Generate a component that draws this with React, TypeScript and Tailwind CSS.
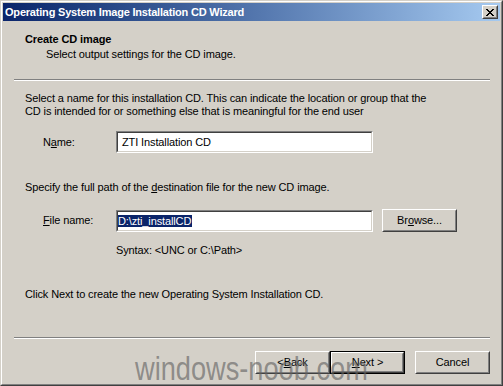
import React from "react";

const font = { fontFamily: '"Liberation Sans", Arial, sans-serif' };

function Btn({ children, w = 75 }: { children: React.ReactNode; w?: number }) {
  return (
    <div
      className="h-[23px] border border-t-white border-l-white border-r-[#404040] border-b-[#404040] bg-[#d4d0c8]"
      style={{ width: w }}
    >
      <div className="h-full w-full border border-t-[#d4d0c8] border-l-[#d4d0c8] border-r-[#808080] border-b-[#808080] flex items-center justify-center text-[11px] leading-[13px] text-black">
        {children}
      </div>
    </div>
  );
}

function DefaultBtn({ children }: { children: React.ReactNode }) {
  return (
    <div className="w-[75px] h-[23px] border border-black bg-[#d4d0c8]">
      <div className="h-full w-full border border-t-white border-l-white border-r-[#404040] border-b-[#404040]">
        <div className="h-full w-full border border-t-[#d4d0c8] border-l-[#d4d0c8] border-r-[#808080] border-b-[#808080] flex items-center justify-center text-[11px] leading-[13px] text-black">
          {children}
        </div>
      </div>
    </div>
  );
}

function TextBox({ children, pl = 4 }: { children: React.ReactNode; pl?: number }) {
  return (
    <div className="w-[257px] h-[22px] border border-t-[#808080] border-l-[#808080] border-r-white border-b-white">
      <div
        className="h-full w-full border border-t-[#404040] border-l-[#404040] border-r-[#d4d0c8] border-b-[#d4d0c8] bg-white flex items-center text-[11px] leading-[13px] text-black"
        style={{ paddingLeft: pl }}
      >
        {children}
      </div>
    </div>
  );
}

function Separator() {
  return <div className="ml-[11px] w-[476px] h-[2px] border-t border-t-[#808080] border-b border-b-white" />;
}

export default function App() {
  return (
    <div className="w-[503px] h-[386px] relative overflow-hidden tracking-[-0.12px]" style={font}>
      <div className="w-full h-full border border-t-[#d4d0c8] border-l-[#d4d0c8] border-r-[#404040] border-b-[#404040] bg-[#d4d0c8]">
        <div className="w-full h-full border border-t-white border-l-white border-r-[#808080] border-b-[#808080] p-px flex flex-col">
          {/* Title bar */}
          <div className="h-[18px] flex items-center justify-between bg-gradient-to-r from-[#0a246a] to-[#a6caf0] pl-[2px] pr-[2px]">
            <span className="text-white font-bold text-[11px] leading-[13px] whitespace-nowrap tracking-[-0.2px]">
              Operating System Image Installation CD Wizard
            </span>
            <div className="w-[16px] h-[14px] border border-t-white border-l-white border-r-[#404040] border-b-[#404040] bg-[#d4d0c8]">
              <div className="w-full h-full border border-t-[#d4d0c8] border-l-[#d4d0c8] border-r-[#808080] border-b-[#808080] flex items-center justify-center">
                <svg width="8" height="7" viewBox="0 0 8 7" shapeRendering="crispEdges">
                  <path d="M0 0h2v1H0zM6 0h2v1H6zM1 1h2v1H1zM5 1h2v1H5zM2 2h4v1H2zM3 3h2v1H3zM2 4h4v1H2zM1 5h2v1H1zM5 5h2v1H5zM0 6h2v1H0zM6 6h2v1H6z" fill="#000" />
                </svg>
              </div>
            </div>
          </div>

          {/* Content */}
          <div className="flex flex-col text-[11px] leading-[13px] text-black">
            <div className="pt-[12px] pl-[22px] font-bold">Create CD image</div>
            <div className="mt-[2px] pl-[43px]">Select output settings for the CD image.</div>
            <div className="mt-[18px]">
              <Separator />
            </div>

            <div className="mt-[11px] pl-[22px] whitespace-nowrap">
              <div>Select a name for this installation CD. This can indicate the location or group that the</div>
              <div>CD is intended for or something else that is meaningful for the end user</div>
            </div>

            <div className="mt-[13px] flex items-center">
              <div className="w-[113px] pl-[40px]">
                N<span className="underline">a</span>me:
              </div>
              <TextBox>ZTI Installation CD</TextBox>
            </div>

            <div className="mt-[28px] pl-[22px]">
              Specify the full path of the <span className="underline">d</span>estination file for the new CD image.
            </div>

            <div className="mt-[15px] flex items-center">
              <div className="w-[113px] pl-[40px]">
                <span className="underline">F</span>ile name:
              </div>
              <TextBox pl={0}>
                <span className="bg-[#0a246a] text-white leading-[12px] pr-px">D:\zti_installCD</span>
              </TextBox>
              <div className="ml-[9px]">
                <Btn>
                  Br<span className="underline">o</span>wse...
                </Btn>
              </div>
            </div>

            <div className="mt-[12px] pl-[113px]">Syntax: &lt;UNC or C:\Path&gt;</div>

            <div className="mt-[31px] pl-[22px]">Click Next to create the new Operating System Installation CD.</div>

            <div className="mt-[36px]">
              <Separator />
            </div>

            <div className="mt-[12px] flex justify-end pr-[10px]">
              <Btn>
                &lt; <span className="underline">B</span>ack
              </Btn>
              <DefaultBtn>
                <span className="underline">N</span>ext &gt;
              </DefaultBtn>
              <div className="ml-[10px]">
                <Btn>Cancel</Btn>
              </div>
            </div>
          </div>
        </div>
      </div>

      {/* Watermark */}
      <div className="absolute left-[135px] top-[351px] text-[34px] leading-[34px] tracking-normal text-[#646464]/65 whitespace-nowrap origin-left scale-x-[0.8] pointer-events-none">
        windows-noob.com
      </div>
    </div>
  );
}
